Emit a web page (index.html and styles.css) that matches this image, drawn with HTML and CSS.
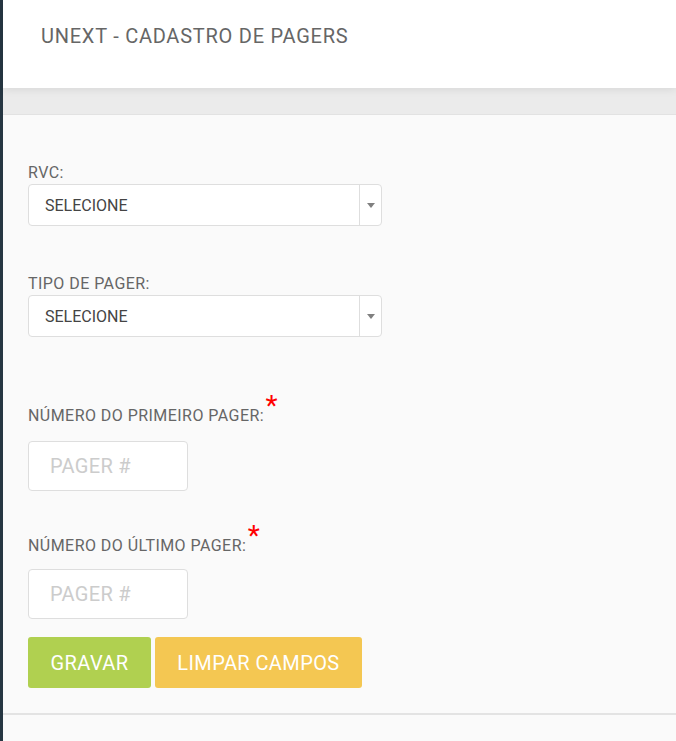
FILE: index.html
```html
<!DOCTYPE html>
<html lang="pt-BR">
<head>
    <meta charset="UTF-8">
    <meta name="viewport" content="width=device-width, initial-scale=1.0">
    <title>UNEXT - Cadastro de Pagers</title>
    <link rel="stylesheet" href="styles.css">
</head>
<body>
    <div class="sidebar"></div>

    <div class="page">
        <div class="topbar">
            <h1 class="title">UNEXT - CADASTRO DE PAGERS</h1>
        </div>
        <div class="band"></div>

        <form class="content" action="#" method="POST">
            <div class="group group-rvc">
                <label class="label">RVC:</label>
                <div class="select">
                    <span class="select-value">SELECIONE</span>
                    <span class="select-arrow"></span>
                </div>
            </div>

            <div class="group group-tipo">
                <label class="label">TIPO DE PAGER:</label>
                <div class="select">
                    <span class="select-value">SELECIONE</span>
                    <span class="select-arrow"></span>
                </div>
            </div>

            <div class="group group-first">
                <label class="label label-num">NÚMERO DO PRIMEIRO PAGER:<span class="required">*</span></label>
                <input class="pager-input" type="text" name="first_pager" placeholder="PAGER #">
            </div>

            <div class="group group-last">
                <label class="label label-num">NÚMERO DO ÚLTIMO PAGER:<span class="required">*</span></label>
                <input class="pager-input" type="text" name="last_pager" placeholder="PAGER #">
            </div>

            <div class="actions">
                <button type="submit" class="btn btn-save">GRAVAR</button>
                <button type="reset" class="btn btn-clear">LIMPAR CAMPOS</button>
            </div>
        </form>

        <div class="footer-line"></div>
    </div>
</body>
</html>
```

FILE: styles.css
```css
:root {
    --sidebar: #263642;
    --page-bg: #fafafa;
    --band: #ebebeb;
    --border: #dedede;
    --label: #666666;
    --text: #444444;
    --placeholder: #cccccc;
    --green: #b0d050;
    --yellow: #f4c752;
}

* {
    margin: 0;
    padding: 0;
    box-sizing: border-box;
    font-family: Roboto, "Liberation Sans", sans-serif;
}

body {
    background-color: var(--page-bg);
    display: flex;
    min-height: 100vh;
}

.sidebar {
    width: 3px;
    flex-shrink: 0;
    background-color: var(--sidebar);
}

.page {
    flex: 1;
    display: flex;
    flex-direction: column;
}

.topbar {
    height: 88px;
    background-color: #ffffff;
    padding: 24px 38px 0;
    position: relative;
    z-index: 1;
    box-shadow: 0 2px 8px rgba(0, 0, 0, 0.08);
}

.title {
    font-size: 20px;
    font-weight: 400;
    line-height: 24px;
    letter-spacing: 0.75px;
    color: #666666;
}

.band {
    height: 27px;
    background-color: var(--band);
    border-bottom: 1px solid #e2e2e2;
}

.content {
    padding: 47px 25px 0;
    display: flex;
    flex-direction: column;
}

.group {
    display: flex;
    flex-direction: column;
    align-items: flex-start;
}

.label {
    font-size: 16px;
    line-height: 21px;
    letter-spacing: 0.45px;
    color: var(--label);
    margin-bottom: 1px;
    position: relative;
}

.group-tipo {
    margin-top: 47px;
}

.group-first {
    margin-top: 68px;
}

.group-last {
    margin-top: 44px;
}

.label-num {
    margin-bottom: 15px;
}

.group-last .label-num {
    margin-bottom: 13px;
}

.required {
    position: absolute;
    top: -13px;
    right: -14px;
    color: #ff0000;
    font-size: 28px;
    line-height: 28px;
}

.select {
    width: 354px;
    height: 42px;
    background-color: #ffffff;
    border: 1px solid var(--border);
    border-radius: 4px;
    display: flex;
    align-items: center;
}

.select-value {
    flex: 1;
    padding-left: 16px;
    font-size: 16px;
    color: var(--text);
}

.select-arrow {
    width: 22px;
    height: 100%;
    border-left: 1px solid var(--border);
    display: flex;
    align-items: center;
    justify-content: center;
}

.select-arrow::after {
    content: "";
    border-left: 4px solid transparent;
    border-right: 4px solid transparent;
    border-top: 5px solid #808080;
}

.pager-input {
    width: 160px;
    height: 50px;
    background-color: #ffffff;
    border: 1px solid var(--border);
    border-radius: 4px;
    padding-left: 21px;
    font-size: 20px;
    letter-spacing: 0.3px;
    color: var(--text);
}

.pager-input::placeholder {
    color: var(--placeholder);
}

.actions {
    display: flex;
    gap: 4px;
    margin-top: 18px;
}

.btn {
    height: 51px;
    border: none;
    border-radius: 3px;
    color: #ffffff;
    font-size: 20px;
    letter-spacing: 0.4px;
    padding: 0;
    cursor: pointer;
}

.btn-save {
    background-color: var(--green);
    width: 123px;
}

.btn-clear {
    background-color: var(--yellow);
    width: 207px;
}

.footer-line {
    margin-top: 25px;
    height: 2px;
    background-color: #e3e3e3;
}
```
